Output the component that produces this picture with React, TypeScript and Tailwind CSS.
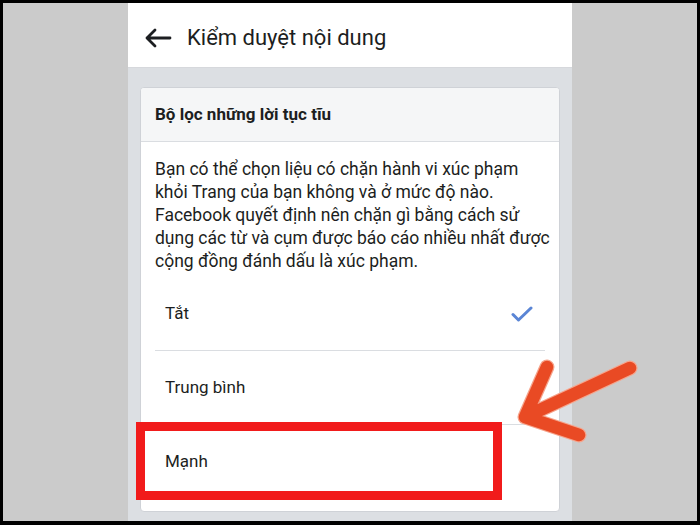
const bodyLines = [
  "Bạn có thể chọn liệu có chặn hành vi xúc phạm",
  "khỏi Trang của bạn không và ở mức độ nào.",
  "Facebook quyết định nên chặn gì bằng cách sử",
  "dụng các từ và cụm được báo cáo nhiều nhất được",
  "cộng đồng đánh dấu là xúc phạm.",
];

const options = [
  { label: "Tắt", checked: true },
  { label: "Trung bình", checked: false },
  { label: "Mạnh", checked: false },
];

export default function App() {
  return (
    <div
      className="relative w-[700px] h-[525px] bg-black pt-[3px] pl-[3px] pr-[3px] pb-[4px] overflow-hidden"
      style={{ fontFamily: "Roboto, 'Noto Sans', sans-serif" }}
    >
      <div className="flex h-full bg-[#cbcbcb]">
        {/* Phone screen */}
        <div className="ml-[125px] w-[444px] h-full flex flex-col bg-[#dcdfe3]">
          {/* Header */}
          <div className="h-[65px] shrink-0 bg-white border-b border-[#d6d8dc] flex items-center pl-[16px] pt-[6px]">
            <svg width="28" height="20" viewBox="0 0 28 20" className="shrink-0">
              <path
                d="M26 10H3M11 2L3 10l8 8"
                fill="none"
                stroke="#1c1e21"
                strokeWidth="2.8"
                strokeLinecap="round"
                strokeLinejoin="round"
              />
            </svg>
            <span className="ml-[15px] text-[22px] text-[#1c1e21] leading-none">Kiểm duyệt nội dung</span>
          </div>

          {/* Content */}
          <div className="px-[12px] pt-[19px]">
            <div className="bg-white rounded-[4px] border border-[#cfd2d7] overflow-hidden">
              <div className="h-[54px] bg-[#f5f6f7] border-b border-[#dadde1] flex items-center px-[14px]">
                <span className="text-[17px] font-bold text-[#1c1e21]">Bộ lọc những lời tục tĩu</span>
              </div>
              <div className="px-[14px] pt-[16px] pb-[4px] text-[17.5px] leading-[23px] text-[#1c1e21] whitespace-nowrap">
                {bodyLines.map((line) => (
                  <div key={line}>{line}</div>
                ))}
              </div>
              <div className="px-[14px] pb-[12px]">
                {options.map((opt, idx) => (
                  <div
                    key={opt.label}
                    className={`h-[74px] flex items-center justify-between pl-[10px] pr-[12px] ${
                      idx < options.length - 1 ? "border-b border-[#dadde1]" : ""
                    }`}
                  >
                    <span className="text-[17px] text-[#1c1e21]">{opt.label}</span>
                    {opt.checked && (
                      <svg width="22" height="16" viewBox="0 0 22 16">
                        <path
                          d="M2 8.5l5.5 5.5L20 2"
                          fill="none"
                          stroke="#5a85d5"
                          strokeWidth="3"
                          strokeLinecap="round"
                          strokeLinejoin="round"
                        />
                      </svg>
                    )}
                  </div>
                ))}
              </div>
            </div>
          </div>
        </div>
      </div>

      {/* Red highlight box */}
      <div className="absolute left-[136px] top-[422px] w-[366px] h-[78px] border-[9px] border-[#f11b1b]" />

      {/* Orange arrow */}
      <svg className="absolute inset-0 pointer-events-none" width="700" height="525" viewBox="0 0 700 525">
        <g fill="none" strokeLinecap="round" strokeLinejoin="round">
          <path d="M630 368L525 417M547 367L525 417L579 435" stroke="#f6a48c" strokeWidth="15" />
          <path d="M630 368L525 417M547 367L525 417L579 435" stroke="#e94a24" strokeWidth="12.5" />
        </g>
      </svg>
    </div>
  );
}
